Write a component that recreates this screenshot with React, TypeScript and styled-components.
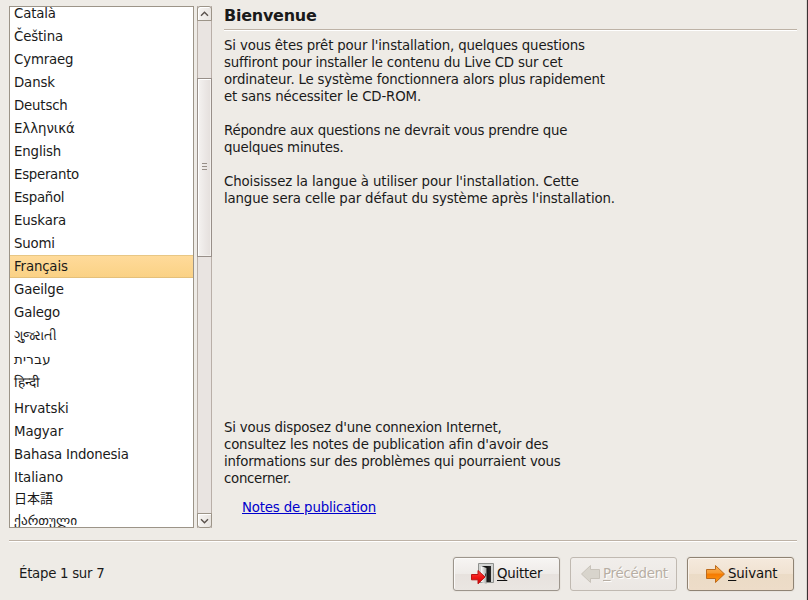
import React from "react";
import styled, { createGlobalStyle, css } from "styled-components";

const GlobalStyle = createGlobalStyle`
  * { box-sizing: border-box; }
  body {
    margin: 0;
    overflow: hidden;
    background: #eeebe6;
    color: #1a1a1a;
    font-family: "DejaVu Sans", "Noto Sans CJK JP", sans-serif;
    font-size: 13.33px;
  }
`;

const Window = styled.div`
  width: 808px;
  height: 600px;
  display: flex;
  flex-direction: column;
  padding: 6px 9px 0 9px;
  border-right: 1px solid #3b3234;
  box-shadow: inset -1px 0 #d9d5cf;
  background: #eeebe6;
`;

const Main = styled.div`
  display: flex;
  height: 522px;
`;

const LanguageList = styled.ul`
  width: 185px;
  height: 522px;
  margin: 0 3px 0 0;
  padding: 0;
  list-style: none;
  overflow: hidden;
  background: #fff;
  border: 1px solid #9c9488;
`;

const Language = styled.li<{ $height: number; $selected?: boolean; $line?: number; $size?: number; $spacing?: number }>`
  height: ${(p) => p.$height}px;
  line-height: ${(p) => p.$line ?? p.$height}px;
  padding-left: 4px;
  white-space: nowrap;
  font-size: ${(p) => p.$size ?? 13.33}px;
  letter-spacing: ${(p) => p.$spacing ?? -0.15}px;
  &:first-child { margin-top: -5px; }
  ${(p) =>
    p.$selected &&
    css`
      background: linear-gradient(#ffdb9b, #fad184);
      box-shadow: inset 0 1px #e8c785, inset 0 -1px #e4c07a;
    `}
`;

const Scrollbar = styled.div`
  width: 15px;
  height: 522px;
  display: flex;
  flex-direction: column;
  background: #e9e4e1;
  border: solid #b9afa8;
  border-width: 0 1px;
`;

const ScrollButton = styled.div<{ $bottom?: boolean }>`
  height: 15px;
  margin: 0 -1px;
  display: grid;
  place-items: center;
  border: 1px solid #9c9488;
  border-radius: ${(p) => (p.$bottom ? "0 0 3px 3px" : "3px 3px 0 0")};
  background: linear-gradient(90deg, #f7f5f3, #e8e4e0);
  box-shadow: inset 1px 1px #fff;
`;

const Trough = styled.div`
  flex: 1;
  padding-top: 57px;
`;

const Thumb = styled.div`
  height: 179px;
  margin: 0 -1px;
  padding-bottom: 2px;
  display: flex;
  flex-direction: column;
  align-items: center;
  justify-content: center;
  gap: 2px;
  border: 1px solid #988f89;
  background: linear-gradient(90deg, #f5f3f1, #ece8e6 50%, #e4dfdc);
  box-shadow: inset 1px 1px #fff, inset -1px -1px #f3f0ed;
`;

const Grip = styled.span`
  width: 5px;
  height: 1px;
  background: #968e87;
`;

const Content = styled.section`
  width: 573px;
  margin-left: 12px;
  display: flex;
  flex-direction: column;
`;

const Title = styled.h1`
  margin: 0;
  height: 23px;
  font-size: 16px;
  line-height: 19px;
  font-weight: bold;
  letter-spacing: -0.25px;
`;

const Separator = styled.div`
  flex: none;
  height: 2px;
  background: #fff;
  border-top: 1px solid #bdb2a6;
`;

const Paragraph = styled.p<{ $top: number }>`
  margin: ${(p) => p.$top}px 0 0;
`;

const Line = styled.span<{ $spacing: number }>`
  display: block;
  height: 17px;
  line-height: 17px;
  white-space: nowrap;
  letter-spacing: ${(p) => p.$spacing}px;
`;

const NotesLink = styled.a`
  align-self: flex-start;
  margin: 12px 0 0 18px;
  line-height: 17px;
  letter-spacing: -0.17px;
  color: #0000cc;
  text-decoration: underline;
`;

const FooterRule = styled(Separator)`
  margin-top: 12px;
  width: 788px;
`;

const Footer = styled.footer`
  display: flex;
  gap: 10px;
  padding: 15px 4px 0 10px;
`;

const Step = styled.span`
  flex: 1;
  line-height: 33px;
  letter-spacing: -0.28px;
`;

const Button = styled.button<{ $tone?: "primary" | "disabled" }>`
  width: 107px;
  height: 34px;
  padding: 0 0 0 10px;
  display: flex;
  align-items: center;
  font: inherit;
  color: #111;
  border: 1px solid #9c958c;
  border-radius: 3px;
  background: linear-gradient(#f7f5f3, #eeebe8 50%, #e7e2de 51%, #eae6e2);
  box-shadow: inset 1px 1px #fbfaf9, 0 0 0 1px #e8e4de;
  ${(p) =>
    p.$tone === "primary" &&
    css`
      padding-left: 18px;
      border-color: #8f8373;
      background: linear-gradient(#f5eadd, #f0e2d1 50%, #ebdbc6 51%, #eddcc8);
      box-shadow: inset 1px 1px #faf3eb, 0 0 0 1px #e8e4de;
    `}
  ${(p) =>
    p.$tone === "disabled" &&
    css`
      color: #b7aea3;
      text-shadow: 1px 1px #fff;
      border-color: #c0b9b1;
      background: linear-gradient(#f1eeeb, #ebe7e3);
      box-shadow: none;
    `}
  svg { flex: none; margin-top: 2px; }
`;

const Label = styled.span<{ $spacing: number }>`
  margin: 0 0 2px 2px;
  letter-spacing: ${(p) => p.$spacing}px;
`;

const Mnemonic = styled.span`
  text-decoration: underline;
  text-underline-offset: 2px;
  text-decoration-thickness: 1px;
`;

type Row = { name: string; height?: number; line?: number; size?: number; spacing?: number };

const languages: Row[] = [
  { name: "Català" },
  { name: "Čeština" },
  { name: "Cymraeg" },
  { name: "Dansk" },
  { name: "Deutsch", spacing: -0.18 },
  { name: "Ελληνικά", spacing: -0.05 },
  { name: "English" },
  { name: "Esperanto", spacing: -0.28 },
  { name: "Español", spacing: -0.3 },
  { name: "Euskara" },
  { name: "Suomi", spacing: -0.2 },
  { name: "Français" },
  { name: "Gaeilge" },
  { name: "Galego" },
  { name: "ગુજરાતી", height: 24, spacing: -0.4 },
  { name: "עברית", height: 23, spacing: 0.3 },
  { name: "हिन्दी", height: 26, line: 22, size: 13.7, spacing: 0 },
  { name: "Hrvatski", spacing: -0.05 },
  { name: "Magyar", spacing: -0.1 },
  { name: "Bahasa Indonesia", spacing: -0.18 },
  { name: "Italiano", spacing: -0.05 },
  { name: "日本語", height: 21, size: 13, line: 20, spacing: 0 },
  { name: "ქართული", height: 23, line: 21, spacing: 0.05 },
];

const ArrowUp = () => (
  <svg width="9" height="6" viewBox="0 0 9 6">
    <path d="M1 4.7 4.5 1.3 8 4.7" fill="none" stroke="#59514b" strokeWidth="1.4" />
  </svg>
);

const ArrowDown = () => (
  <svg width="9" height="6" viewBox="0 0 9 6">
    <path d="M1 1.3 4.5 4.7 8 1.3" fill="none" stroke="#59514b" strokeWidth="1.4" />
  </svg>
);

const QuitIcon = () => (
  <svg width="31" height="24" viewBox="0 0 31 24">
    <defs>
      <linearGradient id="door">
        <stop offset="0" stopColor="#ffffff" />
        <stop offset="1" stopColor="#a9aba8" />
      </linearGradient>
      <linearGradient id="opening">
        <stop offset="0" stopColor="#555" />
        <stop offset=".4" stopColor="#0c0c0c" />
        <stop offset="1" stopColor="#2a2a2a" />
      </linearGradient>
      <linearGradient id="red" x2="0" y2="1">
        <stop offset="0" stopColor="#ff4a40" />
        <stop offset=".5" stopColor="#f01616" />
        <stop offset="1" stopColor="#d80000" />
      </linearGradient>
    </defs>
    <path d="M14.500.5h15v19h-15z" fill="#d3d5d3" stroke="#8f918e" />
    <path d="M17 3h10v16H17z" fill="url(#opening)" />
    <path d="M17 3 22.500 5v16L17 19z" fill="url(#door)" />
    <path d="M21.500 10.500v3" stroke="#444" />
    <path d="M7.500 11.500H14v-4l7 6.500-7 6.800v-4H7.500z" fill="url(#red)" stroke="#b81414" strokeLinejoin="round" />
  </svg>
);

const ForwardIcon = () => (
  <svg width="20" height="20" viewBox="0 0 20 20">
    <defs>
      <linearGradient id="orange" x2="0" y2="1">
        <stop offset="0" stopColor="#fbb35b" />
        <stop offset=".45" stopColor="#f79a2e" />
        <stop offset=".5" stopColor="#f57900" />
        <stop offset="1" stopColor="#ff9b14" />
      </linearGradient>
    </defs>
    <path d="M.500 4.500h9v-4l9 8.500-9 8.500v-4h-9z" fill="url(#orange)" stroke="#bd6a1c" strokeLinejoin="round" />
  </svg>
);

const BackIcon = () => (
  <svg width="20" height="20" viewBox="0 0 20 20">
    <path d="M18.500 4.500h-9v-4l-9 8.500 9 8.500v-4h9z" fill="#d8d4cc" stroke="#c8c3ba" strokeLinejoin="round" />
  </svg>
);

const intro: [string, number][] = [
  ["Si vous êtes prêt pour l'installation, quelques questions", -0.16],
  ["suffiront pour installer le contenu du Live CD sur cet", -0.2],
  ["ordinateur. Le système fonctionnera alors plus rapidement", -0.19],
  ["et sans nécessiter le CD-ROM.", -0.15],
  ["", 0],
  ["Répondre aux questions ne devrait vous prendre que", -0.235],
  ["quelques minutes.", -0.22],
  ["", 0],
  ["Choisissez la langue à utiliser pour l'installation. Cette", -0.12],
  ["langue sera celle par défaut du système après l'installation.", -0.15],
];

const network: [string, number][] = [
  ["Si vous disposez d'une connexion Internet,", -0.19],
  ["consultez les notes de publication afin d'avoir des", -0.18],
  ["informations sur des problèmes qui pourraient vous", -0.18],
  ["concerner.", -0.3],
];

const TextBlock = ({ lines, top }: { lines: [string, number][]; top: number }) => (
  <Paragraph $top={top}>
    {lines.map(([text, spacing], i) => (
      <Line key={i} $spacing={spacing}>{text}</Line>
    ))}
  </Paragraph>
);

export default function App() {
  return (
    <Window>
      <GlobalStyle />
      <Main>
        <LanguageList>
          {languages.map((l) => (
            <Language
              key={l.name}
              $height={l.height ?? 23}
              $line={l.line}
              $size={l.size}
              $spacing={l.spacing}
              $selected={l.name === "Français"}
            >
              {l.name}
            </Language>
          ))}
        </LanguageList>
        <Scrollbar>
          <ScrollButton><ArrowUp /></ScrollButton>
          <Trough>
            <Thumb><Grip /><Grip /><Grip /></Thumb>
          </Trough>
          <ScrollButton $bottom><ArrowDown /></ScrollButton>
        </Scrollbar>
        <Content>
          <Title>Bienvenue</Title>
          <Separator />
          <TextBlock lines={intro} top={6} />
          <TextBlock lines={network} top={212} />
          <NotesLink>Notes de publication</NotesLink>
        </Content>
      </Main>
      <FooterRule />
      <Footer>
        <Step>Étape 1 sur 7</Step>
        <Button><QuitIcon /><Label $spacing={-0.2}><Mnemonic>Q</Mnemonic>uitter</Label></Button>
        <Button $tone="disabled"><BackIcon /><Label $spacing={-0.25}><Mnemonic>P</Mnemonic>récédent</Label></Button>
        <Button $tone="primary"><ForwardIcon /><Label $spacing={-0.15}><Mnemonic>S</Mnemonic>uivant</Label></Button>
      </Footer>
    </Window>
  );
}
